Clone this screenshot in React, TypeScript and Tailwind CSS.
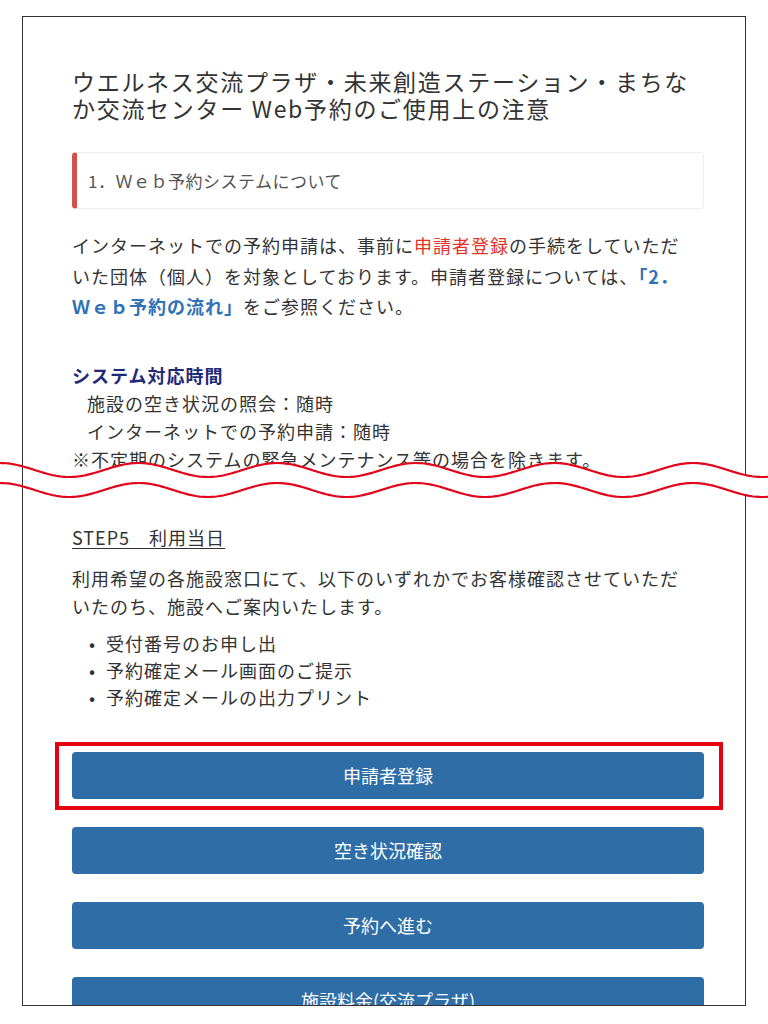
import React from "react";

// wavy "cut" marks drawn across the page
function WaveBreak() {
  const P = 138.6;
  const amp = 7;
  const pts = (cy: number) => {
    const arr: string[] = [];
    for (let x = 0; x <= 768; x += 2) {
      const y = cy - amp * Math.cos((2 * Math.PI * x) / P);
      arr.push(`${x},${y.toFixed(2)}`);
    }
    return arr;
  };
  const top = pts(30);
  const bottom = pts(50);
  const fill = `M24,${top[12].split(",")[1]} L${top.slice(12).join(" L")} L${bottom
    .slice(12)
    .reverse()
    .join(" L")} Z`;
  return (
    <svg
      className="absolute left-0 top-[440px] pointer-events-none"
      width="768"
      height="70"
      viewBox="0 0 768 70"
    >
      <path d={fill} fill="#ffffff" />
      <path d={`M${top.join(" L")}`} fill="none" stroke="#e0061c" strokeWidth="2.2" />
      <path d={`M${bottom.join(" L")}`} fill="none" stroke="#e0061c" strokeWidth="2.2" />
    </svg>
  );
}

const buttons = ["申請者登録", "空き状況確認", "予約へ進む", "施設料金(交流プラザ)"];

export default function App() {
  return (
    <div className="relative w-[768px] h-[1024px] bg-white overflow-hidden font-['Noto_Sans_CJK_JP',sans-serif] text-[#333]">
      <div className="ml-[22px] mt-[16px] w-[724px] h-[990px] border border-[#333] overflow-hidden pl-[49px] pr-[41px] pt-[51px]">
        {/* TITLE */}
        <h1 className="text-[23px] tracking-[1.7px] leading-[27px] font-normal text-[#333]">
          ウエルネス交流プラザ・未来創造ステーション・まちなか交流センター Web予約のご使用上の注意
        </h1>

        {/* SECTION HEADER */}
        <div className="mt-[30px] h-[57px] flex items-center pl-[11px] border border-[#eee] border-l-[5px] border-l-[#d2504c] rounded-[4px] text-[17px] text-[#555] tracking-[0.5px]">
          1．Ｗｅｂ予約システムについて
        </div>

        <p className="mt-[21px] text-[18px] tracking-[1px] leading-[30.5px]">
          インターネットでの予約申請は、事前に<span className="text-[#e6332a]">申請者登録</span>
          の手続をしていただ
          <br />
          いた団体（個人）を対象としております。申請者登録については、
          <span className="font-bold text-[#2f72b5]">「2．</span>
          <br />
          <span className="font-bold text-[#2f72b5]">Ｗｅｂ予約の流れ」</span>をご参照ください。
        </p>

        <div className="mt-[39px] text-[18px] tracking-[1px] leading-[28px]">
          <div className="font-bold text-[#1f2a78]">システム対応時間</div>
          <div className="pl-[15px]">施設の空き状況の照会：随時</div>
          <div className="pl-[15px]">インターネットでの予約申請：随時</div>
          <div>※不定期のシステムの緊急メンテナンス等の場合を除きます。</div>
        </div>

        {/* STEP5 */}
        <div className="mt-[50px] text-[18px] tracking-[1px] leading-[28px]">
          <div className="underline underline-offset-[3px]">STEP5　利用当日</div>
          <p className="mt-[13px]">
            利用希望の各施設窓口にて、以下のいずれかでお客様確認させていただ
            <br />
            いたのち、施設へご案内いたします。
          </p>
          <ul className="mt-[10px] leading-[27px]">
            {["受付番号のお申し出", "予約確定メール画面のご提示", "予約確定メールの出力プリント"].map((t) => (
              <li key={t} className="flex">
                <span className="w-[34px] pl-[17px]">•</span>
                <span>{t}</span>
              </li>
            ))}
          </ul>
        </div>

        {/* BUTTONS */}
        <div className="mt-[41px] flex flex-col gap-[28px]">
          {buttons.map((b, i) => (
            <div key={b} className="relative">
              <div className="h-[47px] rounded-[4px] bg-[#2e6da6] text-white text-[18px] flex items-center justify-center">
                {b}
              </div>
              {i === 0 && (
                <span className="absolute -left-[17px] -right-[19px] -top-[10px] -bottom-[11px] border-[4px] border-[#e50012]" />
              )}
            </div>
          ))}
        </div>
      </div>
      <WaveBreak />
    </div>
  );
}
